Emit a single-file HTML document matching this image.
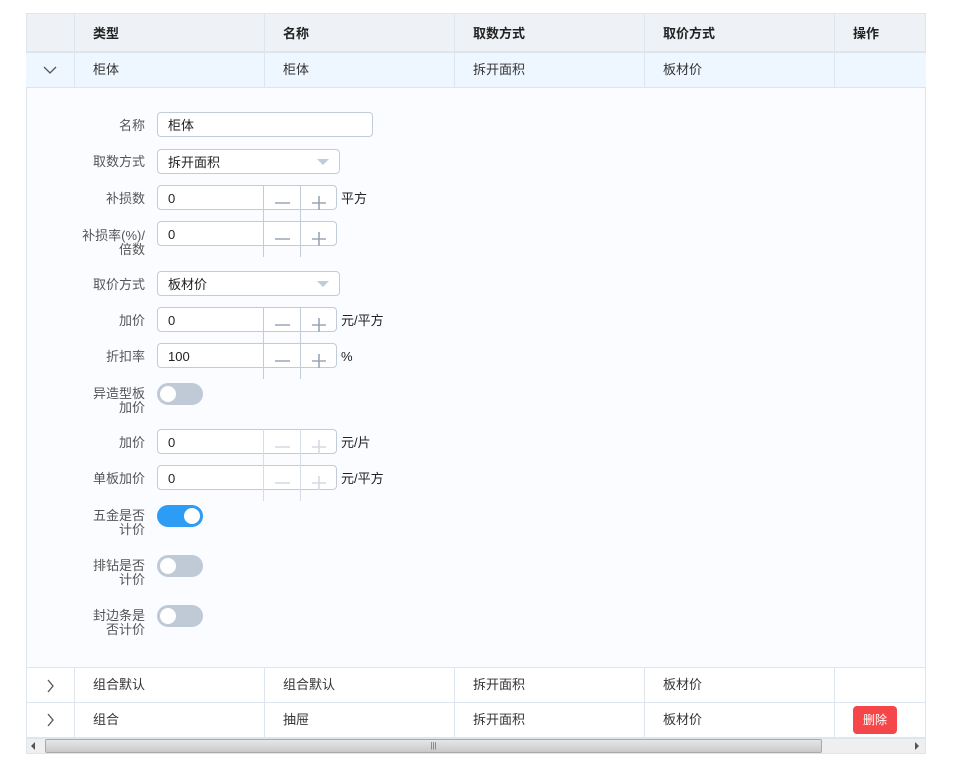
<!DOCTYPE html>
<html><head><meta charset="utf-8"><style>
*{box-sizing:border-box;margin:0;padding:0}
body{width:957px;height:771px;background:#fff;font-family:"Liberation Sans","Noto Sans CJK SC",sans-serif;font-size:13px;color:#333;position:relative;overflow:hidden}
.a{position:absolute}
.hd{background:#eef1f5;font-weight:bold;color:#222;font-size:13px}
.vl{position:absolute;width:1px;background:#dfe5ec}
.hl{position:absolute;height:1px;background:#dfe5ec}
.t{position:absolute;line-height:16px}
.lb{position:absolute;right:812px;text-align:right;color:#555;font-size:13px;line-height:14px}
.inp{position:absolute;left:157px;height:25px;border:1px solid #c2ccd8;border-radius:4px;background:#fff;padding-left:10px;line-height:25px;color:#222}
.num{width:180px}
.div{position:absolute;width:1px;background:#c2ccd8;height:36px}
.ic{position:absolute;left:263px}
.dis .div{background:#d6dde6}
.sw{position:absolute;left:157px;width:46px;height:22px;border-radius:11px;background:#c0cad6}
.sw::after{content:"";position:absolute;left:3px;top:3px;width:16px;height:16px;border-radius:50%;background:#fff}
.sw.on{background:#2d9cf5}.sw.on::after{left:27px}
.arr{position:absolute;right:10px;top:9px;width:0;height:0;border-left:6px solid transparent;border-right:6px solid transparent;border-top:6px solid #c2ccd8}
.unit{position:absolute;left:341px;color:#222;line-height:14px}
</style></head><body>
<div class="a hd" style="left:26px;top:13px;width:900px;height:39px;border:1px solid #dfe5ec"></div>
<div class="a" style="left:26px;top:52px;width:900px;height:35px;background:#eef7ff"></div>
<div class="a" style="left:26px;top:87px;width:900px;height:580px;background:#fafcff;border-left:1px solid #dfe5ec;border-right:1px solid #dfe5ec"></div>
<div class="a" style="left:26px;top:667px;width:900px;height:71px;background:#fff;border-left:1px solid #dfe5ec;border-right:1px solid #dfe5ec"></div>
<div class="hl" style="left:26px;top:52px;width:900px"></div>
<div class="hl" style="left:26px;top:87px;width:900px"></div>
<div class="hl" style="left:26px;top:667px;width:900px"></div>
<div class="hl" style="left:26px;top:702px;width:900px"></div>
<div class="hl" style="left:26px;top:737px;width:900px"></div>
<div class="vl" style="left:74px;top:13px;height:74px"></div>
<div class="vl" style="left:264px;top:13px;height:74px"></div>
<div class="vl" style="left:454px;top:13px;height:74px"></div>
<div class="vl" style="left:644px;top:13px;height:74px"></div>
<div class="vl" style="left:834px;top:13px;height:74px"></div>
<div class="vl" style="left:74px;top:667px;height:71px"></div>
<div class="vl" style="left:264px;top:667px;height:71px"></div>
<div class="vl" style="left:454px;top:667px;height:71px"></div>
<div class="vl" style="left:644px;top:667px;height:71px"></div>
<div class="vl" style="left:834px;top:667px;height:71px"></div>
<div class="t" style="left:93px;top:26px;font-weight:bold;color:#222">类型</div>
<div class="t" style="left:283px;top:26px;font-weight:bold;color:#222">名称</div>
<div class="t" style="left:473px;top:26px;font-weight:bold;color:#222">取数方式</div>
<div class="t" style="left:663px;top:26px;font-weight:bold;color:#222">取价方式</div>
<div class="t" style="left:853px;top:26px;font-weight:bold;color:#222">操作</div>
<svg class="a" style="left:42px;top:65px" width="16" height="10"><path d="M2 2 L8 8 L14 2" fill="none" stroke="#555" stroke-width="1.3"/></svg>
<div class="t" style="left:93px;top:62px">柜体</div>
<div class="t" style="left:283px;top:62px">柜体</div>
<div class="t" style="left:473px;top:62px">拆开面积</div>
<div class="t" style="left:663px;top:62px">板材价</div>
<svg class="a" style="left:46px;top:678px" width="10" height="16"><path d="M2 2 L7 8 L2 14" fill="none" stroke="#555" stroke-width="1.3"/></svg>
<div class="t" style="left:93px;top:677px">组合默认</div>
<div class="t" style="left:283px;top:677px">组合默认</div>
<div class="t" style="left:473px;top:677px">拆开面积</div>
<div class="t" style="left:663px;top:677px">板材价</div>
<svg class="a" style="left:46px;top:712px" width="10" height="16"><path d="M2 2 L7 8 L2 14" fill="none" stroke="#555" stroke-width="1.3"/></svg>
<div class="t" style="left:93px;top:712px">组合</div>
<div class="t" style="left:283px;top:712px">抽屉</div>
<div class="t" style="left:473px;top:712px">拆开面积</div>
<div class="t" style="left:663px;top:712px">板材价</div>
<div class="a" style="left:853px;top:706px;width:44px;height:28px;background:#f5474a;border-radius:4px;color:#fff;font-size:12px;line-height:28px;text-align:center">删除</div>
<div class="a" style="left:26px;top:738px;width:900px;height:16px;background:#efefef;border:1px solid #dfe5ec"></div>
<div class="a" style="left:45px;top:739px;width:777px;height:14px;background:linear-gradient(#e6e6e6,#c9c9c9);border:1px solid #a9a9a9;border-radius:2px;font-size:8px;line-height:12px;text-align:center;color:#666">|||</div>
<div class="a" style="left:31px;top:742px;width:0;height:0;border-top:4px solid transparent;border-bottom:4px solid transparent;border-right:4px solid #555"></div>
<div class="a" style="left:915px;top:742px;width:0;height:0;border-top:4px solid transparent;border-bottom:4px solid transparent;border-left:4px solid #555"></div>

<div class="lb" style="top:119px">名称</div>
<div class="inp" style="top:112px;width:216px">柜体</div>
<div class="lb" style="top:155px">取数方式</div>
<div class="inp" style="top:149px;width:183px">拆开面积<div class="arr"></div></div>

<div class="lb" style="top:192px">补损数</div>
<div class="inp num" style="top:185px">0</div><div class="div" style="left:263px;top:185px"></div><div class="div" style="left:300px;top:185px"></div>
<svg class="ic" style="top:185px" width="74" height="30"><path d="M12 18H27M49 18H63M56 11V25" stroke="#9aa6b5" stroke-width="1.6"/></svg>
<div class="unit" style="top:192px">平方</div>

<div class="lb" style="top:229px">补损率(%)/<br>倍数</div>
<div class="inp num" style="top:221px">0</div><div class="div" style="left:263px;top:221px"></div><div class="div" style="left:300px;top:221px"></div>
<svg class="ic" style="top:221px" width="74" height="30"><path d="M12 18H27M49 18H63M56 11V25" stroke="#9aa6b5" stroke-width="1.6"/></svg>

<div class="lb" style="top:278px">取价方式</div>
<div class="inp" style="top:271px;width:183px">板材价<div class="arr"></div></div>

<div class="lb" style="top:314px">加价</div>
<div class="inp num" style="top:307px">0</div><div class="div" style="left:263px;top:307px"></div><div class="div" style="left:300px;top:307px"></div>
<svg class="ic" style="top:307px" width="74" height="30"><path d="M12 18H27M49 18H63M56 11V25" stroke="#9aa6b5" stroke-width="1.6"/></svg>
<div class="unit" style="top:314px">元/平方</div>

<div class="lb" style="top:350px">折扣率</div>
<div class="inp num" style="top:343px">100</div><div class="div" style="left:263px;top:343px"></div><div class="div" style="left:300px;top:343px"></div>
<svg class="ic" style="top:343px" width="74" height="30"><path d="M12 18H27M49 18H63M56 11V25" stroke="#9aa6b5" stroke-width="1.6"/></svg>
<div class="unit" style="top:350px">%</div>

<div class="lb" style="top:387px">异造型板<br>加价</div>
<div class="sw" style="top:383px"></div>
<div class="dis">
<div class="lb" style="top:436px">加价</div>
<div class="inp num" style="top:429px">0</div><div class="div" style="left:263px;top:429px"></div><div class="div" style="left:300px;top:429px"></div>
<svg class="ic" style="top:429px" width="74" height="30"><path d="M12 18H27M49 18H63M56 11V25" stroke="#d3dae2" stroke-width="1.6"/></svg>
<div class="unit" style="top:436px">元/片</div>
<div class="lb" style="top:472px">单板加价</div>
<div class="inp num" style="top:465px">0</div><div class="div" style="left:263px;top:465px"></div><div class="div" style="left:300px;top:465px"></div>
<svg class="ic" style="top:465px" width="74" height="30"><path d="M12 18H27M49 18H63M56 11V25" stroke="#d3dae2" stroke-width="1.6"/></svg>
<div class="unit" style="top:472px">元/平方</div>
</div>
<div class="lb" style="top:509px">五金是否<br>计价</div>
<div class="sw on" style="top:505px"></div>
<div class="lb" style="top:559px">排钻是否<br>计价</div>
<div class="sw" style="top:555px"></div>
<div class="lb" style="top:609px">封边条是<br>否计价</div>
<div class="sw" style="top:605px"></div>
</body></html>
